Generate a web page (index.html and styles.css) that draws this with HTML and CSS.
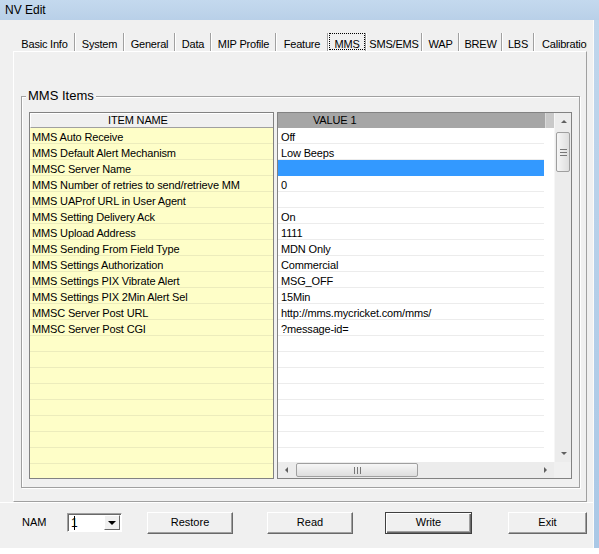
FILE: index.html
```html
<!DOCTYPE html>
<html>
<head>
	<title>NV Edit</title>
	<link rel="stylesheet" href="styles.css">
</head>
<body>
	<div class="window">
		<div class="titlebar">NV Edit</div>
		<div class="frame">
			<div class="client">
				<!-- tab strip, MMS page is the current one -->
				<ul class="tabs">
					<li>Basic Info</li>
					<li>System</li>
					<li>General</li>
					<li>Data</li>
					<li>MIP Profile</li>
					<li>Feature</li>
					<li class="active"><span>MMS</span></li>
					<li>SMS/EMS</li>
					<li>WAP</li>
					<li>BREW</li>
					<li>LBS</li>
					<li>Calibration</li>
				</ul>

				<div class="panel">
					<fieldset class="group">
						<legend>MMS Items</legend>
						<div class="grid">
							<div class="names">
								<div class="head">ITEM NAME</div>
								<div class="rows">
									<div class="row">MMS Auto Receive</div>
									<div class="row">MMS Default Alert Mechanism</div>
									<div class="row">MMSC Server Name</div>
									<div class="row">MMS Number of retries to send/retrieve MM</div>
									<div class="row">MMS UAProf URL in User Agent</div>
									<div class="row">MMS Setting Delivery Ack</div>
									<div class="row">MMS Upload Address</div>
									<div class="row">MMS Sending From Field Type</div>
									<div class="row">MMS Settings Authorization</div>
									<div class="row">MMS Settings PIX Vibrate Alert</div>
									<div class="row">MMS Settings PIX 2Min Alert Sel</div>
									<div class="row">MMSC Server Post URL</div>
									<div class="row">MMSC Server Post CGI</div>
								</div>
							</div>

							<div class="values">
								<div class="view">
									<div class="head">
										<span class="col">VALUE 1</span>
										<span class="rest"></span>
									</div>
									<div class="rows">
										<div class="row">Off</div>
										<div class="row">Low Beeps</div>
										<div class="row selected"></div>
										<div class="row">0</div>
										<div class="row"></div>
										<div class="row">On</div>
										<div class="row">1111</div>
										<div class="row">MDN Only</div>
										<div class="row">Commercial</div>
										<div class="row">MSG_OFF</div>
										<div class="row">15Min</div>
										<div class="row">http://mms.mycricket.com/mms/</div>
										<div class="row">?message-id=</div>
									</div>
								</div>
								<div class="vscroll">
									<div class="arrow"><i class="up"></i></div>
									<div class="track">
										<div class="thumb"><i class="grip"></i></div>
									</div>
									<div class="arrow"><i class="down"></i></div>
								</div>
								<div class="hscroll">
									<div class="arrow"><i class="left"></i></div>
									<div class="track">
										<div class="thumb"><i class="grip"></i></div>
									</div>
									<div class="arrow"><i class="right"></i></div>
								</div>
								<div class="corner"></div>
							</div>
						</div>
					</fieldset>
				</div>

				<div class="bottom">
					<span class="label">NAM</span>
					<div class="combo">
						<span class="text">1</span><span class="caret"></span>
						<span class="drop"><i class="down"></i></span>
					</div>
					<button class="btn restore">Restore</button>
					<button class="btn read">Read</button>
					<button class="btn write">Write</button>
					<button class="btn exit">Exit</button>
				</div>
			</div>
			<div class="edge"></div>
		</div>
	</div>
</body>
</html>
```

FILE: styles.css
```css
* {
	box-sizing: border-box;
}

body {
	margin: 0;
	background: #fff;
	font-family: "Liberation Sans", Arial, sans-serif;
	font-size: 11px;
	color: #000;
}

.window {
	width: 599px;
	height: 554px;
	overflow: hidden;
	background: #fff;
}

.titlebar {
	height: 20px;
	line-height: 20px;
	padding-left: 5px;
	font-size: 12px;
	background: linear-gradient(#c4d9ee, #b9d0e8);
}

.frame {
	display: flex;
	height: 528px;
}

.client {
	width: 594px;
	display: flex;
	flex-direction: column;
	padding-left: 13px;
	background: #f0f0f0;
	border-right: 1px solid #fbfbfb;
}

.edge {
	width: 5px;
	background: linear-gradient(#c0d6ec, #aac8e6);
}

/* tabs */
.tabs {
	list-style: none;
	margin: 13px 0 0 2px;
	padding: 0;
	display: flex;
	width: 572px;
	height: 18px;
	overflow: hidden;
	white-space: nowrap;
	letter-spacing: -0.2px;
}

.tabs li {
	flex: none;
	height: 18px;
	padding: 4px 2px 0 0;
	line-height: 14px;
	text-align: center;
	background:
		linear-gradient(#a0a0a0, #a0a0a0) no-repeat right 1px top 0 / 1px 18px,
		linear-gradient(#fff, #fff) no-repeat right 0 top 0 / 1px 18px;
}

/* tab widths follow the captions of the original dialog */
.tabs li:nth-child(1) { width: 61px; }
.tabs li:nth-child(2) { width: 49px; }
.tabs li:nth-child(3) { width: 51px; }
.tabs li:nth-child(4) { width: 36px; }
.tabs li:nth-child(5) { width: 65px; }
.tabs li:nth-child(6) { width: 52px; }
.tabs li:nth-child(7) { width: 38px; }
.tabs li:nth-child(8) { width: 56px; }
.tabs li:nth-child(9) { width: 37px; }
.tabs li:nth-child(10) { width: 43px; }
.tabs li:nth-child(11) { width: 32px; }
.tabs li:nth-child(12) { padding-left: 7px; background: none; }

.tabs li.active {
	padding: 0 2px 0 0;
}

.tabs li.active span {
	display: block;
	height: 17px;
	padding-top: 4px;
	line-height: 14px;
	outline: 1px dotted #000;
	outline-offset: -1px;
}

/* tab page */
.panel {
	width: 574px;
	border: 1px solid;
	border-color: #fff #a0a0a0 #a0a0a0 #fff;
	padding: 36px 6px 13px 7px;
}

.group {
	margin: 0;
	height: 400px;
	padding: 8px 7px 7px 7px;
	border: 1px solid #a0a0a0;
	box-shadow: inset 1px 1px #fff, 1px 1px #fff;
}

.group legend {
	margin-left: -3px;
	padding: 0 2px;
	font-size: 13px;
	line-height: 16px;
	background: #f0f0f0;
}

.grid {
	display: flex;
	gap: 3px;
	height: 367px;
	letter-spacing: -0.15px;
}

/* item name list */
.names {
	width: 245px;
	display: flex;
	flex-direction: column;
	border: 1px solid #828282;
}

.names .head {
	height: 15px;
	padding-left: 77px;
	background: #f0f0f0;
	border-top: 1px solid #fff;
	border-left: 1px solid #fff;
	border-bottom: 1px solid #a0a0a0;
	line-height: 13px;
}

.names .rows {
	flex: 1;
	background: repeating-linear-gradient(#fefec8 0 15px, #ececbc 15px 16px);
}

.row {
	height: 16px;
	padding: 1px 0 0 2px;
	line-height: 16px;
	white-space: nowrap;
	overflow: hidden;
}

/* value list */
.values {
	width: 295px;
	display: grid;
	grid-template-columns: 276px 17px;
	grid-template-rows: 349px 16px;
	border: 1px solid #828282;
}

.view {
	background: #fff;
	overflow: hidden;
}

.values .head {
	display: flex;
	height: 15px;
	line-height: 15px;
}

.values .head .col {
	width: 267px;
	padding-left: 35px;
	background: #a6a6a6;
}

.values .head .rest {
	width: 9px;
	background: #c9c9c9;
	border-left: 1px solid #dadada;
}

.values .rows {
	height: 334px;
	background: repeating-linear-gradient(#fff 0 15px, #ececec 15px 16px) no-repeat 0 0 / 266px 100%;
}

.values .row {
	width: 266px;
	padding-left: 3px;
}

.values .row.selected {
	background: #3399ff;
}

/* scrollbars */
.vscroll,
.hscroll {
	display: flex;
	background: #ececec;
}

.vscroll {
	flex-direction: column;
	border-left: 1px solid #f6f6f6;
}

.arrow {
	flex: none;
	width: 17px;
	height: 17px;
	display: flex;
	align-items: center;
	justify-content: center;
}

.hscroll .arrow {
	height: 16px;
}

.track {
	flex: 1;
}

.vscroll .thumb {
	margin: 2px 0 0 1px;
	width: 14px;
	height: 40px;
	border: 1px solid #9f9f9f;
	border-radius: 2px;
	background: linear-gradient(to right, #f6f6f6, #dedede);
	display: flex;
	align-items: center;
	justify-content: center;
}

.vscroll .grip {
	width: 7px;
	height: 7px;
	background: repeating-linear-gradient(#777 0 1px, transparent 1px 3px);
}

.hscroll .thumb {
	margin: 1px 0 0 1px;
	width: 122px;
	height: 14px;
	border: 1px solid #9f9f9f;
	border-radius: 2px;
	background: linear-gradient(#f6f6f6, #dedede);
	display: flex;
	align-items: center;
	justify-content: center;
}

.hscroll .grip {
	width: 7px;
	height: 7px;
	background: repeating-linear-gradient(to right, #777 0 1px, transparent 1px 3px);
}

.corner {
	background: #f0f0f0;
}

i.up,
i.down,
i.left,
i.right {
	display: block;
	width: 0;
	height: 0;
	border: 3px solid transparent;
}

i.up {
	border-bottom-color: #606060;
	border-top-width: 0;
}

i.down {
	border-top-color: #606060;
	border-bottom-width: 0;
}

i.left {
	border-right-color: #606060;
	border-left-width: 0;
}

i.right {
	border-left-color: #606060;
	border-right-width: 0;
}

/* bottom bar */
.bottom {
	display: flex;
	align-items: flex-start;
	height: 46px;
	margin-left: -13px;
	padding: 9px 0 0 22px;
	border-top: 1px solid #fff;
}

.label {
	width: 45px;
	padding-top: 4px;
}

.combo {
	display: flex;
	align-items: center;
	width: 55px;
	height: 19px;
	margin-top: 1px;
	padding-left: 2px;
	background: #fff;
	border: 1px solid;
	border-color: #a0a0a0 #fff #fff #a0a0a0;
	box-shadow: inset 1px 1px #696969;
}

.combo .text {
	font-size: 12px;
	margin-left: 1px;
}

.combo .caret {
	width: 1px;
	height: 14px;
	margin-left: -4px;
	background: #000;
}

.combo .drop {
	margin-left: auto;
	margin-right: 1px;
	width: 16px;
	height: 15px;
	display: flex;
	align-items: center;
	justify-content: center;
	background: #f0f0f0;
	border: 1px solid;
	border-color: #fff #696969 #696969 #fff;
}

.combo .drop i.down {
	border-width: 4px 4px 0 4px;
	border-top-color: #000;
}

.btn {
	height: 22px;
	padding: 0 0 2px;
	font: inherit;
	color: #000;
	background: #f0f0f0;
	border: 1px solid;
	border-color: #fff #696969 #696969 #fff;
	box-shadow: inset -1px -1px #a0a0a0;
}

.restore {
	width: 86px;
	margin-left: 25px;
}

.read {
	width: 86px;
	margin-left: 34px;
}

.write {
	width: 87px;
	margin-left: 32px;
	border-color: #404040;
	box-shadow: inset 1px 1px #fff, inset -1px -1px #696969, inset -2px -2px #a0a0a0;
}

.exit {
	width: 79px;
	margin-left: 36px;
}
```
